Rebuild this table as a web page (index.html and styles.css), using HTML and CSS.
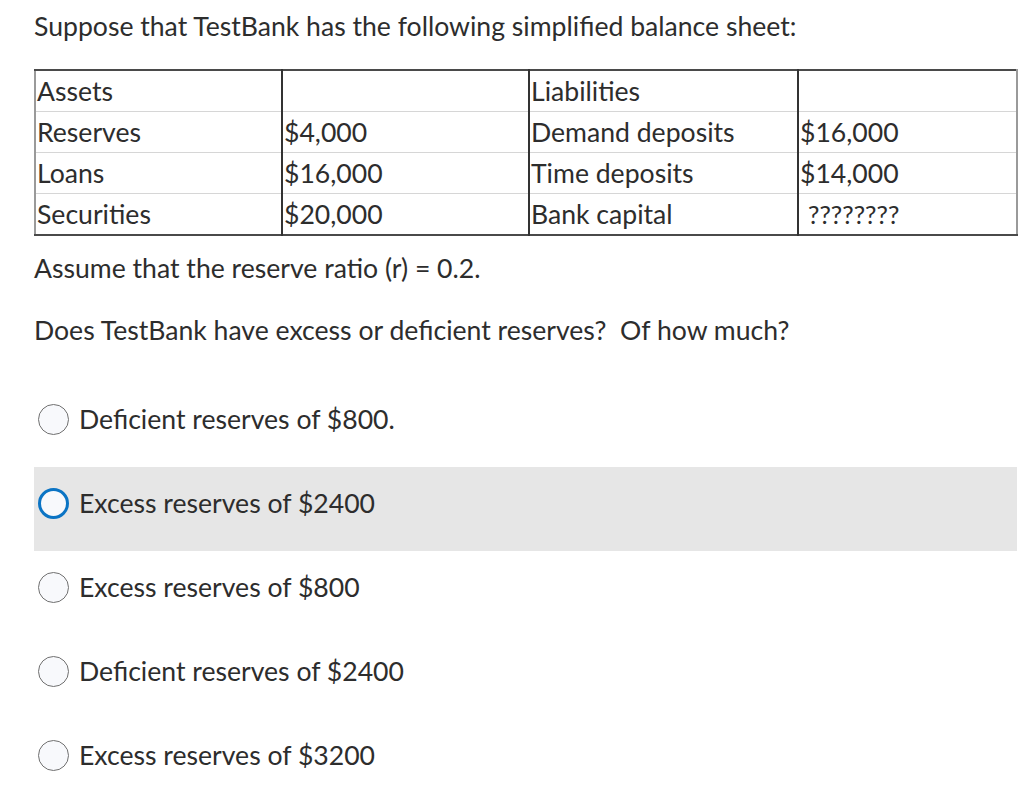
FILE: index.html
```html
<!DOCTYPE html>
<html>
<head>
<meta charset="utf-8">
<link rel="stylesheet" href="styles.css">
</head>
<body>
<div class="page">
  <p class="title">Suppose that TestBank has the following simplified balance sheet:</p>
  <table class="sheet">
    <colgroup><col class="c1"><col class="c2"><col class="c3"><col class="c4"></colgroup>
    <tr><td>Assets</td><td></td><td>Liabilities</td><td></td></tr>
    <tr><td>Reserves</td><td>$4,000</td><td>Demand deposits</td><td>$16,000</td></tr>
    <tr><td>Loans</td><td>$16,000</td><td>Time deposits</td><td>$14,000</td></tr>
    <tr><td>Securities</td><td>$20,000</td><td>Bank capital</td><td class="q">????????</td></tr>
  </table>
  <p class="assume">Assume that the reserve ratio (r) = 0.2.</p>
  <p class="question">Does TestBank have excess or deficient reserves?&nbsp; Of how much?</p>
  <div class="options">
    <div class="option"><span class="radio"></span><span>Deficient reserves of $800.</span></div>
    <div class="option hover"><span class="radio focus"></span><span>Excess reserves of $2400</span></div>
    <div class="option"><span class="radio"></span><span>Excess reserves of $800</span></div>
    <div class="option"><span class="radio"></span><span>Deficient reserves of $2400</span></div>
    <div class="option"><span class="radio"></span><span>Excess reserves of $3200</span></div>
  </div>
</div>
</body>
</html>
```

FILE: styles.css
```css
html, body {
  margin: 0;
  padding: 0;
  background: #fff;
}
body {
  font-family: Lato, "Open Sans", sans-serif;
  color: #2d2d2d;
  font-size: 26.6px;
}
.page {
  padding: 0 7px 0 34px;
}
.title {
  margin: 0;
  padding-top: 10px;
  line-height: 32px;
}
.sheet {
  margin-top: 27px;
  width: 982px;
  border-collapse: collapse;
  table-layout: fixed;
  font-size: 26.6px;
  border-top: 2px solid #4a4a4a;
  border-bottom: 2px solid #4a4a4a;
  border-left: 2px solid #9a9a9a;
  border-right: 2px solid #9a9a9a;
}
.c1 { width: 247px; }
.c2 { width: 247px; }
.c3 { width: 269px; }
.c4 { width: 219px; }
.sheet td {
  height: 40px;
  padding: 0 0 0 1px;
  line-height: 32px;
  border-top: 1px solid #d6d6d6;
  border-left: 2px solid #333;
  vertical-align: middle;
  white-space: nowrap;
}
.sheet td:first-child { border-left: none; }
.sheet tr:first-child td { border-top: none; }
.sheet td.q {
  padding-left: 9px;
  font-size: 25.5px;
}
.assume {
  margin: 16px 0 0;
  line-height: 32px;
}
.question {
  margin: 30px 0 0;
  line-height: 32px;
}
.options {
  margin-top: 37px;
  display: flex;
  flex-direction: column;
}
.option {
  height: 84px;
  box-sizing: border-box;
  padding-bottom: 12px;
  display: flex;
  align-items: center;
  gap: 10px;
  padding-left: 4px;
  line-height: 32px;
}
.option.hover {
  background: #e6e6e6;
}
.radio {
  width: 31px;
  height: 31px;
  box-sizing: border-box;
  border-radius: 50%;
  border: 1.5px solid #707070;
  background: #f8f9fc;
  flex: none;
}
.radio.focus {
  border: 3px solid #0b74c4;
}
```
